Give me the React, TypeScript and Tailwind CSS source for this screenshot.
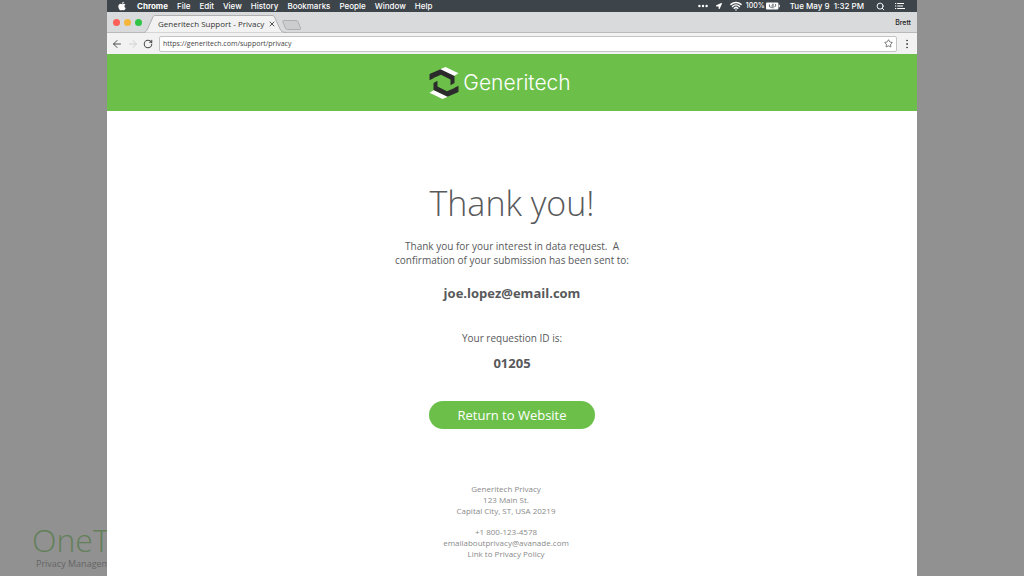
import type { ReactNode } from "react";
import { FaApple, FaLocationArrow } from "react-icons/fa";
import { ArrowLeft, ArrowRight, EllipsisVertical, RotateCw, Search, Star, Wifi, X } from "lucide-react";

const MENUS = ["File", "Edit", "View", "History", "Bookmarks", "People", "Window", "Help"];

function MenuBar() {
  return (
    <div className="flex h-3 items-center justify-between bg-[#3d454b] pr-3 pl-2.5 font-['Inter',sans-serif] text-[8px] leading-3 font-medium whitespace-nowrap text-white">
      <nav className="flex items-center gap-[9px]">
        <FaApple className="mr-px size-2.5" />
        <button className="font-bold">Chrome</button>
        {MENUS.map((name) => (
          <button key={name}>{name}</button>
        ))}
      </nav>
      <div className="flex items-center">
        <svg className="mr-2 h-2 w-2.5" viewBox="0 0 10 8" fill="currentColor">
          <circle cx="1.4" cy="4" r="1.2" />
          <circle cx="5" cy="4" r="1.2" />
          <circle cx="8.6" cy="4" r="1.2" />
        </svg>
        <FaLocationArrow className="mr-2 size-1.5" />
        <Wifi className="mr-1 size-3" strokeWidth={3} />
        <span className="text-[7px]">100%</span>
        <svg className="mr-2.5 ml-px h-2 w-3.5" viewBox="0 0 14 8">
          <rect x="0" y="0.5" width="12.4" height="7" rx="1" fill="#fff" />
          <rect x="12.8" y="2.8" width="1" height="2.4" fill="#fff" />
          <path d="M3.4 2.400v1.600q0 1.200 1.200 1.200H6.600M5.600 3.800 7 2.400M7 1.600v4.800M9.600 2v1.800q0 1-1.200 1" fill="none" stroke="#3d454b" strokeWidth="0.8" />
        </svg>
        <span className="mr-3 whitespace-pre">Tue May 9  1:32 PM</span>
        <Search className="mr-2.5 size-[9px]" strokeWidth={2.5} />
        <svg className="h-2 w-2.5" viewBox="0 0 10 8" stroke="currentColor" strokeWidth="1.1">
          <path d="M0 1.5h1.2M2.2 1.5H9M0 4h1.2M2.2 4H8M0 6.5h1.2M2.2 6.5H10" />
        </svg>
      </div>
    </div>
  );
}

function TabStrip() {
  return (
    <div className="flex h-[21px] items-end justify-between border-b border-[#b9b9b9] bg-[#d9dadb]">
      <div className="flex items-end">
        <div className="flex h-5 items-center gap-1 pl-1.5">
          <span className="size-[7px] rounded-full bg-[#fb5f57]" />
          <span className="size-[7px] rounded-full bg-[#f6b63c]" />
          <span className="size-[7px] rounded-full bg-[#30c346]" />
        </div>
        <div className="relative -mb-px ml-0.5 h-[18px] w-[142px]">
          <svg className="absolute inset-0 size-full" viewBox="0 0 142 18" preserveAspectRatio="none">
            <path d="M0 17.5C2 17 3 15.5 4 13L8.5 3C9 1.2 10 .5 11 .5H128C129.5 .5 130.500 1.2 131 3L136 14C137 16.5 139 17.5 142 17.5" fill="#f2f2f2" stroke="#b0b0b0" />
          </svg>
          <div className="relative flex h-full items-center justify-between pr-2.5 pl-3.5 font-['Open_Sans',sans-serif] text-[8px] whitespace-nowrap text-[#333]">
            <span>Generitech Support - Privacy</span>
            <button aria-label="Close tab">
              <X className="size-2" strokeWidth={2.5} />
            </button>
          </div>
        </div>
        <button aria-label="New tab" className="-ml-1 mb-0.5">
          <svg className="h-2.5 w-5" viewBox="0 0 20 10">
            <path d="M1.5 .5H14q1.500 0 2 1.200l2.600 6.600q.4 1.200-1 1.200H5.500q-1.500 0-2-1.200L.8 1.700Q.4 .5 1.500 .5Z" fill="#cccdce" stroke="#aeaeae" />
          </svg>
        </button>
      </div>
      <span className="self-center pt-0.5 pr-1.5 font-['Inter',sans-serif] text-[7px] leading-3 font-medium text-[#222]">Brett</span>
    </div>
  );
}

function Toolbar() {
  return (
    <div className="flex h-[21px] items-center bg-[#f2f2f2] pl-1 text-[#4d4d4d]">
      <button aria-label="Back">
        <ArrowLeft className="size-3" strokeWidth={2} />
      </button>
      <button aria-label="Forward" className="ml-1 text-[#d0d0d0]">
        <ArrowRight className="size-3" strokeWidth={2} />
      </button>
      <button aria-label="Reload" className="ml-1">
        <RotateCw className="size-2.5" strokeWidth={2.5} />
      </button>
      <div className="ml-1.5 flex h-4 flex-1 items-center rounded-xs border border-[#c4c4c4] bg-white pr-[3px] pl-[3px]">
        <input
          aria-label="Address"
          defaultValue="https://generitech.com/support/privacy"
          className="min-w-0 flex-1 font-['Open_Sans',sans-serif] text-[7px] leading-3 text-[#444] outline-none"
        />
        <button aria-label="Bookmark this page">
          <Star className="size-[9px]" strokeWidth={2} />
        </button>
      </div>
      <button aria-label="More" className="mr-1 ml-1">
        <EllipsisVertical className="size-3" strokeWidth={2} />
      </button>
    </div>
  );
}

function Logo() {
  return (
    <div className="flex items-center gap-1 text-white">
      <svg className="h-8 w-[30px]" viewBox="0 0 30 32">
        <path d="M10.5 2.6 16.5 0 29.5 6.3 25 9Z" fill="#fff" />
        <path d="M.5 7 11.5 2.2 25.5 9V16L21.5 18.2V12.400L12 7.800 4.5 11V11.300L.5 13.2Z" fill="#2b2b2b" />
        <path d="M19.5 29.4 13.5 32 .5 25.7 5 23Z" fill="#fff" />
        <path d="M29.5 25 18.5 29.8 4.5 23V16L8.5 13.8V19.600L18 24.200 25.5 21V20.700L29.5 18.8Z" fill="#2b2b2b" />
      </svg>
      <span className="font-['Inter',sans-serif] text-[21px] leading-8 font-light">Generitech</span>
    </div>
  );
}

function Line({ children }: { children: ReactNode }) {
  return <p className="leading-[11px]">{children}</p>;
}

export default function App() {
  return (
    <div className="grid min-h-screen grid-cols-[107fr_810fr_107fr] bg-[#919191] font-['Open_Sans',sans-serif]">
      {/* Page behind the browser window */}
      <aside className="flex min-w-0 flex-col justify-end overflow-hidden pb-1.5 pl-8 whitespace-nowrap">
        <span className="text-[32px] leading-9 font-light text-[#63805a]">OneTrust</span>
        <span className="pl-1 text-[9px] leading-3 text-[#656565]">Privacy Management Software</span>
      </aside>

      <div className="flex min-w-0 flex-col bg-white">
        <MenuBar />
        <TabStrip />
        <Toolbar />
        <header className="flex h-[57px] items-center justify-center bg-[#6cc04a] pr-6">
          <Logo />
        </header>

        <main className="flex flex-col items-center text-center text-[#58595b]">
          <h1 className="mt-16 text-[34px] leading-14 font-light">Thank you!</h1>
          <p className="mt-2 text-[10px] leading-[14px] whitespace-pre">
            {"Thank you for your interest in data request.  A\nconfirmation of your submission has been sent to:"}
          </p>
          <p className="mt-4 text-[13px] leading-5 font-bold">joe.lopez@email.com</p>
          <p className="mt-7 text-[10px] leading-[14px]">Your requestion ID is:</p>
          <p className="mt-2 text-[13px] leading-5 font-bold">01205</p>
          <button className="mt-7 h-7 w-[166px] rounded-full bg-[#6cc04a] pt-0.5 text-[13px] text-white">Return to Website</button>
        </main>

        <footer className="mt-[54px] pr-3 text-center text-[8px] text-[#8a8a8a]">
          <Line>Generitech Privacy</Line>
          <Line>123 Main St.</Line>
          <Line>Capital City, ST, USA 20219</Line>
          <div className="mt-2.5">
            <Line>+1 800-123-4578</Line>
            <Line>
              <a href="mailto:emailaboutprivacy@avanade.com">emailaboutprivacy@avanade.com</a>
            </Line>
            <Line>
              <a href="#privacy">Link to Privacy Policy</a>
            </Line>
          </div>
        </footer>
      </div>
    </div>
  );
}
